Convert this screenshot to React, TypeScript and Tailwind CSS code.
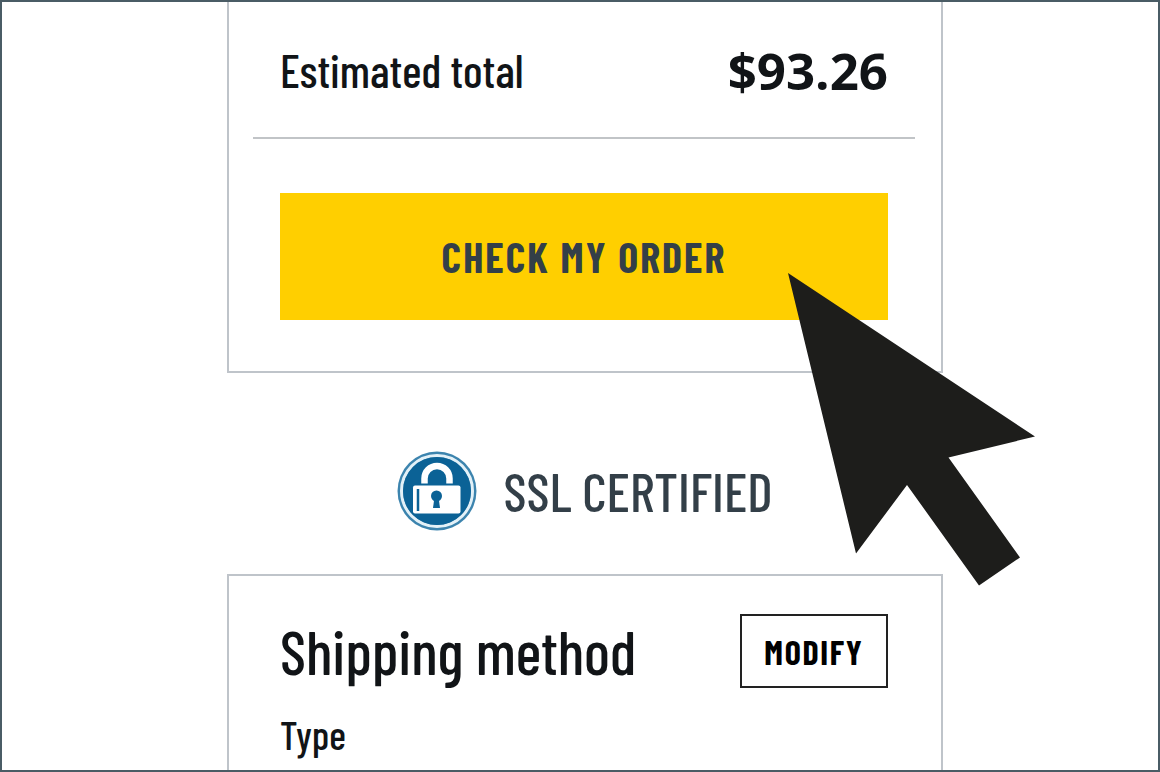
import type { SVGProps } from "react";

function LockBadge(props: SVGProps<SVGSVGElement>) {
  return (
    <svg viewBox="0 0 80 80" aria-hidden="true" {...props}>
      <circle cx="40" cy="40" r="39.500" fill="#3c84ae" />
      <circle cx="40" cy="40" r="35.500" fill="none" stroke="#e3f1f8" strokeWidth="3" />
      <circle cx="40" cy="40" r="34" fill="#0b6296" />
      {/* shackle */}
      <path d="M27.500 32.500V27.500a12.500 12.500 0 0 1 25 0v5" fill="none" stroke="#fff" strokeWidth="6.500" />
      {/* body */}
      <rect x="16" y="34.500" width="47.500" height="28" rx="2" fill="#fff" />
      <path d="M21 38v22" stroke="#0b6296" strokeWidth="2.500" />
      <circle cx="39.500" cy="45" r="5.500" fill="#0b6296" />
      <path d="M37.500 46h4l1.500 11h-7z" fill="#0b6296" />
    </svg>
  );
}

function Pointer(props: SVGProps<SVGSVGElement>) {
  return (
    <svg viewBox="0 0 247 313" aria-hidden="true" {...props}>
      <path d="M0 0L247 163.500L160.500 184.500L232 284.500L191 312.500L119 212L68 280.500Z" fill="#1d1d1b" />
    </svg>
  );
}

export default function App() {
  return (
    <div className="h-screen overflow-hidden border-2 border-[#4a5c65] bg-white pl-2.5 font-['Barlow_Condensed','Roboto_Condensed','Liberation_Sans_Narrow',sans-serif] text-[#111417]">
      <main className="mx-auto w-full max-w-[716px]">
        <section className="relative border-2 border-t-0 border-[#bfc4ca] pr-[26px] pb-[51px] pl-6">
          <div className="flex h-[137px] items-center justify-between border-b-2 border-[#c1c4c7] px-[27px]">
            <span className="text-[46px] leading-none font-medium">Estimated total</span>
            <span className="pt-0.5 font-['Open_Sans',sans-serif] text-[51px] leading-none font-bold">$93.26</span>
          </div>
          <div className="px-[27px] pt-[54px]">
            <button
              type="button"
              className="h-[127px] w-full cursor-pointer bg-[#ffcf00] text-[42px] font-bold tracking-wider text-[#333f48]"
            >
              CHECK MY ORDER
            </button>
          </div>
          <Pointer className="pointer-events-none absolute top-[271px] -right-[94px] z-10 w-[247px]" />
        </section>

        <div className="flex h-[201px] items-center justify-center gap-[26px] pt-[34px]">
          <LockBadge className="size-20" />
          <span className="text-[54px] leading-none font-medium text-[#333f48]">SSL CERTIFIED</span>
        </div>

        <section className="border-2 border-[#bfc4ca] pt-[38px] pr-[53px] pb-12 pl-[51px]">
          <div className="flex items-center justify-between">
            <h2 className="text-[61px] leading-[74px] font-medium">Shipping method</h2>
            <button
              type="button"
              className="h-[74px] w-[148px] cursor-pointer border-2 border-[#222] text-[34px] font-bold tracking-wider text-black"
            >
              MODIFY
            </button>
          </div>
          <p className="mt-[22px] text-[40px] leading-[48px] font-medium">Type</p>
        </section>
      </main>
    </div>
  );
}
